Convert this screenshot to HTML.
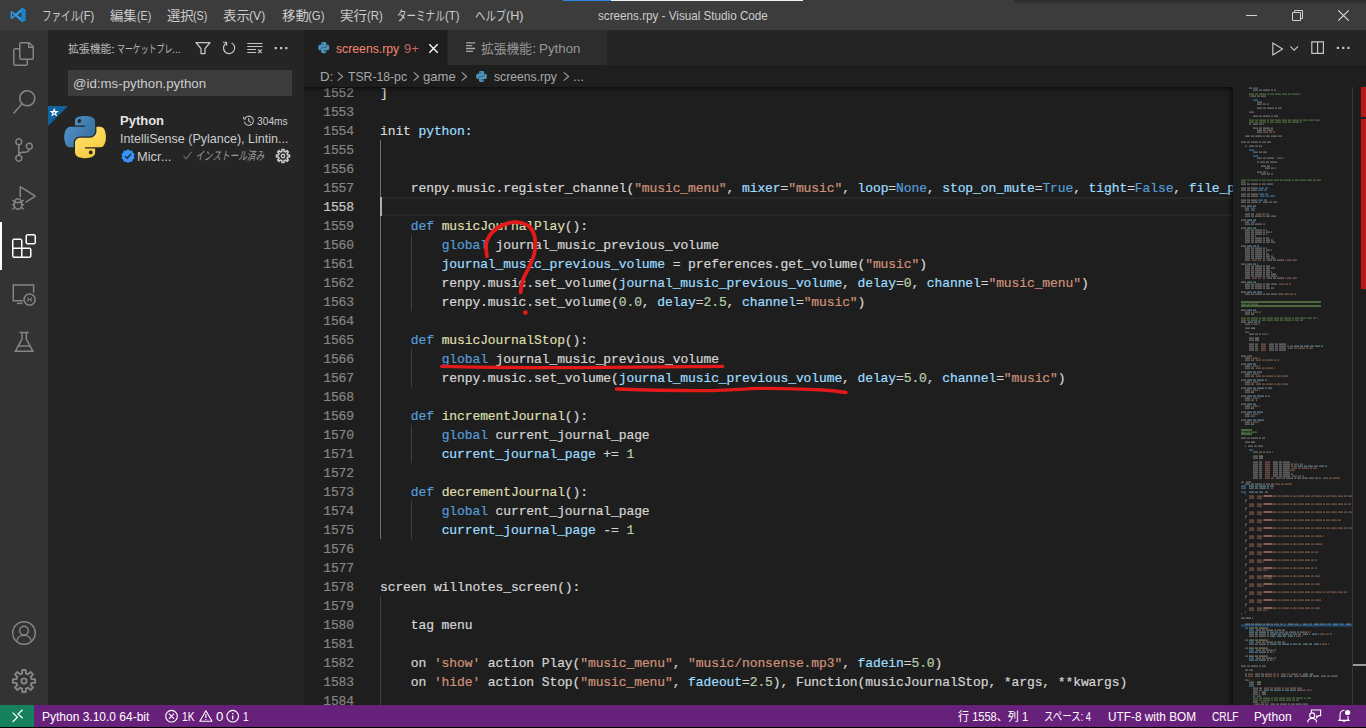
<!DOCTYPE html>
<html lang="ja">
<head>
<meta charset="utf-8">
<title>screens.rpy - Visual Studio Code</title>
<style>
*{box-sizing:border-box;margin:0;padding:0}
html,body{width:1366px;height:728px;overflow:hidden;background:#1e1e1e}
body{position:relative;font-family:"Liberation Sans","Noto Sans CJK JP",sans-serif;font-size:13px;color:#ccc}
.abs{position:absolute}
.t{position:absolute;white-space:nowrap;height:20px;line-height:20px;transform-origin:0 50%;z-index:10}
svg{position:absolute;overflow:visible;z-index:10}
#title{left:0;top:0;width:1366px;height:30px;background:#3c3c3c}
#act{left:0;top:30px;width:48px;height:675px;background:#333}
#side{left:48px;top:30px;width:256px;height:675px;background:#252526}
#search{left:68px;top:70px;width:224px;height:26px;background:#3c3c3c}
#tabs{left:304px;top:30px;width:1062px;height:35px;background:#252526}
#tab1{left:0;top:0;width:143px;height:35px;background:#1e1e1e}
#tab2{left:144px;top:0;width:159px;height:35px;background:#2d2d2d}
#crumbs{left:304px;top:65px;width:1062px;height:22px;background:#1e1e1e;z-index:5}
#code{left:304px;top:83px;width:929px;height:622px;overflow:hidden;font-family:"Liberation Mono",monospace;font-size:13px;letter-spacing:-0.1px;-webkit-text-stroke:0.22px}
.ln{position:absolute;left:0;height:19px;line-height:21px;width:929px;white-space:pre;color:#d4d4d4}
.ln i{position:absolute;left:0;width:50px;text-align:right;font-style:normal;color:#858585}
.ln b{position:absolute;left:76px;font-weight:normal}
.ln.cur i{color:#c6c6c6}
.ln.cur:before{content:"";box-sizing:border-box;position:absolute;left:76px;top:0;width:853px;height:19px;border-top:2px solid #282828;border-bottom:2px solid #282828}
.k{color:#569cd6}.v{color:#9cdcfe}.s{color:#ce9178}.n{color:#b5cea8}.f{color:#dcdcaa}
.g{position:absolute;width:1px;background:#404040}
#status{left:0;top:705px;width:1366px;height:22px;background:#68217a}
#remote{left:0;top:705px;width:34px;height:22px;background:#16825d}
#bottomline{left:0;top:727px;width:1366px;height:1px;background:#000;z-index:20}
</style>
</head>
<body>
<div id="title" class="abs">
<div class="abs" style="left:563px;top:0;width:48px;height:1px;background:#2b88e0"></div>
<div class="abs" style="left:611px;top:0;width:192px;height:1px;background:#f0f0f0"></div>
<div class="abs" style="left:1014px;top:0;width:352px;height:5px;border-bottom-left-radius:6px;background:linear-gradient(to bottom,rgba(0,0,0,.32),rgba(0,0,0,0))"></div>
</div>
<div id="act" class="abs"><div class="abs" style="left:0;top:192px;width:2px;height:48px;background:#fff"></div></div>
<div id="side" class="abs"></div>
<div id="search" class="abs"></div>
<div id="tabs" class="abs"><div id="tab1" class="abs"></div><div id="tab2" class="abs"></div></div>
<div id="crumbs" class="abs"></div>
<div id="code" class="abs">
<div class="g" style="left:76px;top:57px;height:399px;background:#707070"></div>
<div class="g" style="left:76px;top:513px;height:110px"></div>
<div class="g" style="left:107px;top:152px;height:76px"></div>
<div class="g" style="left:107px;top:266px;height:38px"></div>
<div class="g" style="left:107px;top:342px;height:38px"></div>
<div class="g" style="left:107px;top:418px;height:38px"></div>
<div class="abs" style="left:76px;top:114px;width:2px;height:19px;background:#aeafad;z-index:3"></div>
<div class="ln" style="top:0px"><i>1552</i><b>]</b></div>
<div class="ln" style="top:19px"><i>1553</i><b></b></div>
<div class="ln" style="top:38px"><i>1554</i><b>init <span class="v">python:</span></b></div>
<div class="ln" style="top:57px"><i>1555</i><b></b></div>
<div class="ln" style="top:76px"><i>1556</i><b></b></div>
<div class="ln" style="top:95px"><i>1557</i><b>    renpy.music.register_channel(<span class="s">"music_menu"</span>, <span class="v">mixer</span>=<span class="s">"music"</span>, <span class="v">loop</span>=<span class="k">None</span>, <span class="v">stop_on_mute</span>=<span class="k">True</span>, <span class="v">tight</span>=<span class="k">False</span>, <span class="v">file_prefix</span>=<span class="s">""</span></b></div>
<div class="ln cur" style="top:114px"><i>1558</i><b></b></div>
<div class="ln" style="top:133px"><i>1559</i><b>    <span class="k">def</span> <span class="f">musicJournalPlay</span>():</b></div>
<div class="ln" style="top:152px"><i>1560</i><b>        <span class="k">global</span> journal_music_previous_volume</b></div>
<div class="ln" style="top:171px"><i>1561</i><b>        <span class="v">journal_music_previous_volume</span> = preferences.get_volume(<span class="s">"music"</span>)</b></div>
<div class="ln" style="top:190px"><i>1562</i><b>        renpy.music.set_volume(<span class="v">journal_music_previous_volume</span>, <span class="v">delay</span>=<span class="n">0</span>, <span class="v">channel</span>=<span class="s">"music_menu"</span>)</b></div>
<div class="ln" style="top:209px"><i>1563</i><b>        renpy.music.set_volume(<span class="n">0.0</span>, <span class="v">delay</span>=<span class="n">2.5</span>, <span class="v">channel</span>=<span class="s">"music"</span>)</b></div>
<div class="ln" style="top:228px"><i>1564</i><b></b></div>
<div class="ln" style="top:247px"><i>1565</i><b>    <span class="k">def</span> <span class="f">musicJournalStop</span>():</b></div>
<div class="ln" style="top:266px"><i>1566</i><b>        <span class="k">global</span> journal_music_previous_volume</b></div>
<div class="ln" style="top:285px"><i>1567</i><b>        renpy.music.set_volume(<span class="v">journal_music_previous_volume</span>, <span class="v">delay</span>=<span class="n">5.0</span>, <span class="v">channel</span>=<span class="s">"music"</span>)</b></div>
<div class="ln" style="top:304px"><i>1568</i><b></b></div>
<div class="ln" style="top:323px"><i>1569</i><b>    <span class="k">def</span> <span class="f">incrementJournal</span>():</b></div>
<div class="ln" style="top:342px"><i>1570</i><b>        <span class="k">global</span> current_journal_page</b></div>
<div class="ln" style="top:361px"><i>1571</i><b>        <span class="v">current_journal_page</span> += <span class="n">1</span></b></div>
<div class="ln" style="top:380px"><i>1572</i><b></b></div>
<div class="ln" style="top:399px"><i>1573</i><b>    <span class="k">def</span> <span class="f">decrementJournal</span>():</b></div>
<div class="ln" style="top:418px"><i>1574</i><b>        <span class="k">global</span> current_journal_page</b></div>
<div class="ln" style="top:437px"><i>1575</i><b>        <span class="v">current_journal_page</span> -= <span class="n">1</span></b></div>
<div class="ln" style="top:456px"><i>1576</i><b></b></div>
<div class="ln" style="top:475px"><i>1577</i><b></b></div>
<div class="ln" style="top:494px"><i>1578</i><b>screen willnotes_screen():</b></div>
<div class="ln" style="top:513px"><i>1579</i><b></b></div>
<div class="ln" style="top:532px"><i>1580</i><b>    tag menu</b></div>
<div class="ln" style="top:551px"><i>1581</i><b></b></div>
<div class="ln" style="top:570px"><i>1582</i><b>    on <span class="s">'show'</span> action Play(<span class="s">"music_menu"</span>, <span class="s">"music/nonsense.mp3"</span>, <span class="v">fadein</span>=<span class="n">5.0</span>)</b></div>
<div class="ln" style="top:589px"><i>1583</i><b>    on <span class="s">'hide'</span> action Stop(<span class="s">"music_menu"</span>, <span class="v">fadeout</span>=<span class="n">2.5</span>), Function(musicJournalStop, *args, **kwargs)</b></div>
<div class="ln" style="top:608px"><i>1584</i><b></b></div>
</div>
<div class="abs" style="left:304px;top:87px;width:929px;height:618px;box-shadow:inset 0 6px 6px -6px #000,inset -6px 0 6px -6px #000;z-index:7;pointer-events:none"></div>
<svg style="left:1241px;top:87px;z-index:4" width="111" height="618" viewBox="0 0 111 618" fill="none" stroke-width="1.25" stroke-dasharray="5 1 3 1 7 1 2 1 4 1 6 1">
<rect x="0" y="537.5" width="111" height="2" fill="#264f78" stroke="none"/>
<path stroke="#c586c0" opacity="0.6" d="M8 1h3M8 9h1M8 25h5M8 37h2M4 59h2M16 75h2M22 173h2M46 173h4M22 191h2M46 191h4M4 359h1"/>
<path stroke="#569cd6" opacity="0.62" d="M12 1h5M12 13h6M8 63h6M12 69h5M36 71h7M18 101h9M17 103h9M18 107h10M19 109h15M17 113h9M10 121h4M10 123h4M10 135h4M4 245h4M10 329h4M8 363h4M0 399h6M0 401h6M0 405h6M67 537h4M86 537h4M98 537h5M4 541h3M8 543h6M4 553h3M8 555h6M4 561h3M8 563h6M4 569h3M8 571h6M4 593h4M8 599h5M16 609h4"/>
<path stroke="#bdbdbd" opacity="0.5" d="M12 3h23M10 9h15M16 15h6M16 17h12M16 21h26M12 29h26M12 37h11M12 41h20M16 43h16M16 45h5M4 49h37M0 55h30M8 59h13M12 65h14M16 71h18M19 75h17M20 79h10M24 81h11M16 85h11M20 87h12M0 97h33M0 101h17M0 103h16M0 107h17M0 109h18M0 113h16M0 115h21M22 115h14M0 119h5M4 121h4M4 123h4M4 127h10M4 129h31M0 133h5M4 135h4M4 137h20M0 141h5M4 143h22M4 145h27M4 147h22M4 149h11M4 151h24M4 153h28M4 155h30M0 159h5M4 161h22M4 163h27M4 165h22M4 167h24M4 169h28M4 171h30M4 173h6M26 173h19M0 177h5M4 179h25M4 181h30M4 183h25M4 185h27M4 187h31M4 189h33M4 191h6M26 191h19M0 195h5M4 197h33M4 199h24M4 201h29M0 205h5M4 207h38M0 223h5M4 225h7M4 227h5M0 235h6M4 237h7M4 241h5M8 247h12M8 251h5M8 253h5M8 257h10M28 257h18M8 259h10M28 259h24M69 259h4M8 261h10M28 261h18M8 263h10M28 263h18M0 269h5M6 269h6M4 271h7M4 273h10M0 277h5M4 279h7M4 281h10M0 285h5M4 287h7M4 289h10M0 293h5M4 295h7M4 297h10M0 301h5M4 303h7M4 305h5M0 309h5M4 311h7M4 313h10M0 317h5M4 319h7M4 321h5M0 325h5M4 327h7M4 329h5M0 333h5M4 335h7M4 337h5M0 351h24M4 355h5M7 359h15M12 365h12M12 369h5M12 371h5M12 375h10M32 375h18M12 377h10M32 377h20M12 379h10M32 379h24M73 379h4M12 381h10M32 381h18M12 383h10M32 383h16M12 385h10M32 385h18M12 387h10M32 387h20M12 389h10M32 389h18M12 391h10M35 391h45M0 395h3M5 395h6M4 397h29M30 401h2M24 405h3M4 407h1M4 413h2M4 415h1M4 421h2M4 423h1M4 429h2M4 431h1M4 437h2M4 439h1M4 445h2M4 447h1M4 453h2M4 455h1M4 461h2M4 463h1M4 469h2M4 471h1M4 477h2M4 479h1M4 485h2M4 487h1M4 493h2M4 495h1M4 501h2M4 503h1M4 509h2M4 511h1M4 517h2M4 519h1M4 525h1M0 527h1M0 531h4M4 537h28M24 541h3M15 543h29M38 545h25M8 547h23M8 549h23M24 553h3M15 555h29M8 557h23M24 561h3M15 563h20M29 565h2M24 569h3M15 571h20M29 573h2M0 579h26M4 583h3M8 583h4M4 587h2M14 587h12M4 589h2M14 589h12M53 589h9M80 589h17M8 595h6M8 597h6M12 601h10M12 603h10M12 605h7M12 607h7M12 609h2M12 615h5M14 617h13M29 617h38"/>
<path stroke="#6a9955" opacity="0.62" d="M8 7h52M8 33h72M8 35h54M0 93h80M0 95h5M0 217h18M0 231h77M0 233h62M0 345h16M12 611h58M12 613h46"/>
<path stroke="#ce9178" opacity="0.5" d="M22 45h12M15 127h13M11 173h10M51 173h6M11 191h10M51 191h6M38 197h12M43 207h12M12 225h8M12 237h7M21 247h7M20 257h6M20 259h6M20 261h6M47 261h25M20 263h6M12 271h7M15 273h23M12 279h7M15 281h19M12 287h7M15 289h33M12 295h7M15 297h33M12 303h7M12 311h7M12 319h7M12 327h7M12 335h7M25 365h7M24 375h6M24 377h6M53 377h9M24 379h6M24 381h6M51 381h25M24 383h6M49 383h6M24 385h6M24 387h6M24 389h6M51 389h12M24 391h9M82 391h18M34 397h18M8 409h6M16 409h7M31 409h80M8 411h6M16 411h6M8 417h6M16 417h7M31 417h79M8 419h6M16 419h6M8 425h6M16 425h7M31 425h80M8 427h6M16 427h6M8 433h6M16 433h7M31 433h69M8 435h6M16 435h6M8 441h6M16 441h7M31 441h80M8 443h6M16 443h6M8 449h6M16 449h7M31 449h52M8 451h6M16 451h6M8 457h6M16 457h7M31 457h50M8 459h6M16 459h6M8 465h6M16 465h7M31 465h46M8 467h6M16 467h6M8 473h6M16 473h7M31 473h45M8 475h6M16 475h7M8 481h6M16 481h7M31 481h45M8 483h6M16 483h11M8 489h6M16 489h7M31 489h48M8 491h6M16 491h15M8 497h6M16 497h7M31 497h48M8 499h6M16 499h7M8 505h6M16 505h7M31 505h76M8 507h6M16 507h6M8 513h6M16 513h7M31 513h49M8 515h6M16 515h6M8 521h6M16 521h7M31 521h48M8 523h6M16 523h11M33 537h12M53 537h7M63 545h7M79 547h12M55 549h7M81 557h7M7 587h6M26 587h12M40 587h20M7 589h6M26 589h12M23 601h38M60 603h11M20 615h8"/>
<path stroke="#9cdcfe" opacity="0.5" d="M6 119h10M6 133h9M6 141h9M6 159h12M6 177h11M6 195h10M6 205h15M6 223h9M7 235h12M53 259h15M74 259h8M6 277h10M6 285h15M6 293h21M6 301h26M6 309h23M6 317h9M6 325h16M6 333h18M57 379h15M78 379h8M8 399h26M8 401h20M8 405h14M5 531h7M47 537h5M62 537h4M73 537h12M92 537h5M105 537h6M8 545h29M31 547h29M62 547h5M71 547h7M36 549h5M47 549h7M31 557h29M62 557h5M73 557h7M8 565h20M8 573h20M62 587h6M40 589h7M23 603h37"/>
<path stroke="#6a9955" opacity="0.8" stroke-width="1.7" stroke-dasharray="none" d="M0 215h80M0 219h80M0 343h11M0 347h11"/>
<path stroke="#b5cea8" opacity="0.6" d="M10 227h3M10 241h4M14 251h4M14 253h4M10 305h3M15 313h1M10 321h3M10 337h3M10 355h4M18 369h4M18 371h4M68 547h1M31 549h3M42 549h3M68 557h3M32 565h1M32 573h1M69 587h3M48 589h3M16 595h4M16 597h4M21 605h4M21 607h4"/>
<path stroke="#e0a08a" opacity="0.7" stroke-width="1.7" stroke-dasharray="none" d="M23 409h8M23 417h8M23 425h8M23 433h8M23 441h8M23 449h8M23 457h8M23 465h8M23 473h8M23 481h8M23 489h8M23 497h8M23 505h8M23 513h8M23 521h8"/>
<path stroke="#dcdcaa" opacity="0.5" d="M8 541h16M8 553h16M8 561h16M8 569h16M62 589h16"/>
<path stroke="#e02020" opacity="0.9" d="M12 617h1"/>
</svg>
<div id="status" class="abs"></div>
<div id="remote" class="abs"></div>
<span class="t" id="m1a" style="left:42.1px;top:6.0px;font-size:13px;color:#ccc;transform:scaleX(0.7344);">ファイル</span>
<span class="t" id="m1b" style="left:79.8px;top:6.0px;font-size:13px;color:#ccc;transform:scaleX(0.8618);">(F)</span>
<span class="t" id="m2a" style="left:110.1px;top:6.0px;font-size:13px;color:#ccc;transform:scaleX(1.0240);">編集</span>
<span class="t" id="m2b" style="left:136.5px;top:6.0px;font-size:13px;color:#ccc;transform:scaleX(0.8226);">(E)</span>
<span class="t" id="m3a" style="left:166.6px;top:6.0px;font-size:13px;color:#ccc;transform:scaleX(1.0240);">選択</span>
<span class="t" id="m3b" style="left:193.2px;top:6.0px;font-size:13px;color:#ccc;transform:scaleX(0.8288);">(S)</span>
<span class="t" id="m4a" style="left:223.2px;top:6.0px;font-size:13px;color:#ccc;transform:scaleX(1.0323);">表示</span>
<span class="t" id="m4b" style="left:249.4px;top:6.0px;font-size:13px;color:#ccc;transform:scaleX(0.9348);">(V)</span>
<span class="t" id="m5a" style="left:281.5px;top:6.0px;font-size:13px;color:#ccc;transform:scaleX(1.0323);">移動</span>
<span class="t" id="m5b" style="left:307.9px;top:6.0px;font-size:13px;color:#ccc;transform:scaleX(0.8749);">(G)</span>
<span class="t" id="m6a" style="left:339.7px;top:6.0px;font-size:13px;color:#ccc;transform:scaleX(1.0407);">実行</span>
<span class="t" id="m6b" style="left:366.5px;top:6.0px;font-size:13px;color:#ccc;transform:scaleX(0.8769);">(R)</span>
<span class="t" id="m7a" style="left:397.4px;top:6.0px;font-size:13px;color:#ccc;transform:scaleX(0.7337);">ターミナル</span>
<span class="t" id="m7b" style="left:444.8px;top:6.0px;font-size:13px;color:#ccc;transform:scaleX(0.8683);">(T)</span>
<span class="t" id="m8a" style="left:475.1px;top:6.0px;font-size:13px;color:#ccc;transform:scaleX(0.8013);">ヘルプ</span>
<span class="t" id="m8b" style="left:506.2px;top:6.0px;font-size:13px;color:#ccc;transform:scaleX(0.9723);">(H)</span>
<span class="t" id="wt" style="left:598.4px;top:5.5px;font-size:13px;color:#ccc;transform:scaleX(0.8983);">screens.rpy - Visual Studio Code</span>
<span class="t" id="sh1" style="left:67.9px;top:39.2px;font-size:11px;color:#bbb;transform:scaleX(0.9862);">拡張機能</span>
<span class="t" id="sh2" style="left:111.0px;top:39.2px;font-size:11px;color:#bbb;transform:scaleX(1.3000);">:</span>
<span class="t" id="sh3" style="left:117.2px;top:39.2px;font-size:11px;color:#bbb;transform:scaleX(0.7183);">マーケットプレ</span>
<span class="t" id="sh4" style="left:172.2px;top:39.2px;font-size:11px;color:#bbb;transform:scaleX(0.9567);">...</span>
<span class="t" id="sq" style="left:72.7px;top:73.5px;font-size:13px;color:#ccc;transform:scaleX(1.0217);">@id:ms-python.python</span>
<span class="t" id="en" style="left:119.9px;top:110.5px;font-size:13px;color:#e4e4e4;transform:scaleX(0.9997);font-weight:bold">Python</span>
<span class="t" id="ems" style="left:256.6px;top:110.5px;font-size:11px;color:#ccc;transform:scaleX(0.9298);">304ms</span>
<span class="t" id="ed" style="left:119.7px;top:129.3px;font-size:13px;color:#ccc;transform:scaleX(0.9631);">IntelliSense (Pylance), Lintin...</span>
<span class="t" id="ep" style="left:137.0px;top:146.5px;font-size:13px;color:#ccc;transform:scaleX(0.9915);">Micr...</span>
<span class="t" id="ei" style="left:195.8px;top:146.0px;font-size:12px;color:#9a9a9a;transform:scaleX(0.7203) skewX(-16deg);">インストール済み</span>
<span class="t" id="t1" style="left:336.3px;top:39.2px;font-size:13px;color:#f48771;transform:scaleX(0.9405);">screens.rpy</span>
<span class="t" id="t1b" style="left:404.4px;top:39.2px;font-size:13px;color:#c0685a;transform:scaleX(0.9905);">9+</span>
<span class="t" id="t2a" style="left:480.8px;top:39.2px;font-size:13px;color:#969696;transform:scaleX(0.9788);">拡張機能</span>
<span class="t" id="t2b" style="left:532.2px;top:39.2px;font-size:13px;color:#969696;transform:scaleX(1.2659);">:</span>
<span class="t" id="t2c" style="left:538.7px;top:39.2px;font-size:13px;color:#969696;transform:scaleX(1.0251);">Python</span>
<span class="t" id="b1" style="left:319.5px;top:67.3px;font-size:13px;color:#a9a9a9;transform:scaleX(1.0176);">D:</span>
<span class="t" id="b2" style="left:348.4px;top:67.3px;font-size:13px;color:#a9a9a9;transform:scaleX(0.9385);">TSR-18-pc</span>
<span class="t" id="b3" style="left:423.3px;top:67.3px;font-size:13px;color:#a9a9a9;transform:scaleX(1.0068);">game</span>
<span class="t" id="b4" style="left:493.8px;top:67.3px;font-size:13px;color:#a9a9a9;transform:scaleX(0.9345);">screens.rpy</span>
<span class="t" id="b5" style="left:572.7px;top:67.3px;font-size:13px;color:#a9a9a9;transform:scaleX(1.0179);">...</span>
<span class="t" id="s1" style="left:41.6px;top:707.2px;font-size:12px;color:#fff;transform:scaleX(0.9993);">Python 3.10.0 64-bit</span>
<span class="t" id="s2" style="left:182.2px;top:707.2px;font-size:12px;color:#fff;transform:scaleX(0.8556);">1K</span>
<span class="t" id="s3" style="left:215.6px;top:707.2px;font-size:12px;color:#fff;transform:scaleX(1.1034);">0</span>
<span class="t" id="s4" style="left:243.1px;top:707.2px;font-size:12px;color:#fff;transform:scaleX(0.8462);">1</span>
<span class="t" id="s5" style="left:957.7px;top:707.2px;font-size:12px;color:#fff;transform:scaleX(0.9220);">行 1558、列 1</span>
<span class="t" id="s6" style="left:1044.1px;top:707.2px;font-size:12px;color:#fff;transform:scaleX(0.7857);">スペース: 4</span>
<span class="t" id="s7" style="left:1107.9px;top:707.2px;font-size:12px;color:#fff;transform:scaleX(0.9864);">UTF-8 with BOM</span>
<span class="t" id="s8" style="left:1211.7px;top:707.2px;font-size:12px;color:#fff;transform:scaleX(0.8461);">CRLF</span>
<span class="t" id="s9" style="left:1253.8px;top:707.2px;font-size:12px;color:#fff;transform:scaleX(1.0074);">Python</span>
<!-- VS Code logo -->
<svg style="left:10px;top:7px" width="16" height="16" viewBox="0 0 100 100"><path d="M74.9 5.5 L96 15.6 V84.4 L74.9 94.5 L34.5 57.6 L12.4 74.4 L4 70.2 V29.8 L12.4 25.6 L34.5 42.4 Z M75 28 L45 50 L75 72 Z M12.5 38 V62 L25.5 50 Z" fill="#2a9be8" fill-rule="evenodd"/><path d="M74.9 5.5 L96 15.6 V84.4 L74.9 94.5 L71 91 V9 Z" fill="#1b82cd"/></svg>
<!-- window controls -->
<svg style="left:1246px;top:10px" width="11" height="11" viewBox="0 0 11 11"><path d="M0 5.5H11" stroke="#d0d0d0" stroke-width="1"/></svg>
<svg style="left:1292px;top:10px" width="11" height="11" viewBox="0 0 11 11"><path d="M0.5 2.5H8.5V10.5H0.5Z M2.5 2.5V0.5H10.5V8.5H8.5" fill="none" stroke="#d0d0d0" stroke-width="1"/></svg>
<svg style="left:1338px;top:9.5px" width="11" height="11" viewBox="0 0 11 11"><path d="M0.3 0.3L10.7 10.7M10.7 0.3L0.3 10.7" fill="none" stroke="#d8d8d8" stroke-width="1.2"/></svg>
<!-- activity bar -->
<svg style="left:12px;top:42px" width="24" height="24" viewBox="0 0 24 24" fill="#858585"><path d="M17.5 0h-9L7 1.5V6H2.5L1 7.5v15.07L2.5 24h12.07L16 22.57V18h4.7l1.3-1.43V4.5L17.5 0zm0 2.12l2.38 2.38H17.5V2.12zm-3 20.38h-12v-15H7v9.07L8.5 18h6v4.5zm6-6h-12v-15H16V6h4.5v10.5z"/></svg>
<svg style="left:12px;top:90px" width="24" height="24" viewBox="0 0 24 24" fill="#858585"><path d="M15.25 0a8.25 8.25 0 0 0-6.18 13.72L1 22.88l1.12 1 8.05-9.12A8.251 8.251 0 1 0 15.25.01V0zm0 15a6.75 6.75 0 1 1 0-13.5 6.75 6.75 0 0 1 0 13.5z"/></svg>
<svg style="left:12px;top:138px" width="24" height="24" viewBox="0 0 24 24" fill="#858585"><path d="M21.007 8.222A3.738 3.738 0 0 0 15.045 5.2a3.737 3.737 0 0 0 1.156 6.583 2.988 2.988 0 0 1-2.668 1.67h-2.99a4.456 4.456 0 0 0-2.989 1.165V7.4a3.737 3.737 0 1 0-1.494 0v9.117a3.776 3.776 0 1 0 1.816.099 2.99 2.99 0 0 1 2.668-1.667h2.99a4.484 4.484 0 0 0 4.223-3.039 3.736 3.736 0 0 0 3.25-3.687zM4.565 3.738a2.242 2.242 0 1 1 4.484 0 2.242 2.242 0 0 1-4.484 0zm4.484 16.441a2.242 2.242 0 1 1-4.484 0 2.242 2.242 0 0 1 4.484 0zm8.221-9.715a2.242 2.242 0 1 1 0-4.485 2.242 2.242 0 0 1 0 4.485z"/></svg>
<svg style="left:12px;top:186px" width="24" height="24" viewBox="0 0 24 24" fill="#858585"><path d="M10.94 13.5l-1.32 1.32a3.73 3.73 0 0 0-7.24 0L1.06 13.5 0 14.56l1.72 1.72-.22.22V18H0v1.5h1.5v.08c.077.489.214.966.41 1.42L0 22.94 1.06 24l1.65-1.65A4.308 4.308 0 0 0 6 24a4.31 4.31 0 0 0 3.29-1.65L10.94 24 12 22.94 10.09 21c.198-.464.336-.951.41-1.45v-.1H12V18h-1.5v-1.5l-.22-.22L12 14.56l-1.06-1.06zM6 13.5a2.25 2.25 0 0 1 2.25 2.25h-4.5A2.25 2.25 0 0 1 6 13.5zm3 6a3.33 3.33 0 0 1-3 3 3.33 3.33 0 0 1-3-3v-2.25h6v2.25zm14.76-9.9v1.26L13.5 17.37V15.6l8.5-5.37L9 2v9.46a5.07 5.07 0 0 0-1.5-.72V.63L8.64 0l15.12 9.6z"/></svg>
<svg style="left:12px;top:234px" width="24" height="24" viewBox="0 0 24 24" fill="#fff"><path d="M13.5 1.5L15 0h7.5L24 1.5V9l-1.5 1.5H15L13.5 9V1.5zm1.5 0V9h7.5V1.5H15zM0 15V6l1.5-1.5H9L10.5 6v7.5H18l1.5 1.5v7.5L18 24H1.5L0 22.5V15zm9-1.5V6H1.5v7.5H9zM9 15H1.5v7.5H9V15zm1.5 7.5H18V15h-7.5v7.5z"/></svg>
<!-- remote explorer -->
<svg style="left:12px;top:282px" width="24" height="24" viewBox="0 0 24 24" fill="none" stroke="#858585" stroke-width="1.5"><path d="M11.2 18.8H1.3V2.9H21.6V10.8"/><path d="M5 21.4H10.5"/><circle cx="17.6" cy="17.6" r="5.6"/><path d="M15.2 15.6L17 17.5L15.2 19.4M20 15.6L18.2 17.5L20 19.4" stroke-width="1.1"/></svg>
<!-- testing flask -->
<svg style="left:12px;top:330px" width="24" height="24" viewBox="0 0 24 24" fill="none" stroke="#858585" stroke-width="1.5"><path d="M7.5 2.5H16.8"/><path d="M10 2.5V9L3.4 21.3H20.9L14.3 9V2.5"/><path d="M6.4 16H18"/></svg>
<!-- account -->
<svg style="left:12px;top:620.7px" width="24" height="24" viewBox="0 0 24 24" fill="none" stroke="#858585" stroke-width="1.4"><circle cx="12" cy="12" r="11.3"/><circle cx="12" cy="9.6" r="4.4"/><path d="M4.6 20.4C5.2 16.6 8.2 14.4 12 14.4S18.8 16.6 19.4 20.4"/></svg>
<!-- manage gear -->
<svg style="left:12px;top:668.6px" width="24" height="24" viewBox="0 0 24 24" fill="none" stroke="#858585" stroke-width="1.9" stroke-linejoin="round"><path d="M10.11 4.43 L10.25 0.94 L13.75 0.94 L13.89 4.43 L16.02 5.31 L18.58 2.94 L21.06 5.42 L18.69 7.98 L19.57 10.11 L23.06 10.25 L23.06 13.75 L19.57 13.89 L18.69 16.02 L21.06 18.58 L18.58 21.06 L16.02 18.69 L13.89 19.57 L13.75 23.06 L10.25 23.06 L10.11 19.57 L7.98 18.69 L5.42 21.06 L2.94 18.58 L5.31 16.02 L4.43 13.89 L0.94 13.75 L0.94 10.25 L4.43 10.11 L5.31 7.98 L2.94 5.42 L5.42 2.94 L7.98 5.31Z"/><circle cx="12" cy="12" r="2.6"/></svg>
<!-- sidebar header actions -->
<svg style="left:195px;top:40px" width="16" height="16" viewBox="0 0 16 16" fill="none" stroke="#c8c8c8" stroke-width="1.25" stroke-linejoin="round"><path d="M1 2.5H15L10 8.6V13.6H6V8.6Z"/></svg>
<svg style="left:221px;top:40px" width="16" height="16" viewBox="0 0 16 16" fill="none" stroke="#c5c5c5" stroke-width="1.2"><path d="M5.2 3.2A5.6 5.6 0 1 0 10.6 3"/><path d="M2 2.2H5.6V5.8" stroke-width="1.1"/></svg>
<svg style="left:247px;top:40px" width="16" height="16" viewBox="0 0 16 16" fill="none" stroke="#c5c5c5" stroke-width="1"><path d="M0.3 3.5H15.5M0.3 6.5H15.5M0.3 9.5H9M0.3 12.5H9"/><path d="M11 9.3L14.8 13.1M14.8 9.3L11 13.1" stroke-width="1.1"/></svg>
<svg style="left:273px;top:40px" width="16" height="16" viewBox="0 0 16 16" fill="#c5c5c5"><rect x="1.7" y="7" width="2.2" height="2.2"/><rect x="7" y="7" width="2.2" height="2.2"/><rect x="12.2" y="7" width="2.2" height="2.2"/></svg>
<!-- extension item -->
<svg style="left:48px;top:106px" width="20" height="20" viewBox="0 0 20 20"><path d="M0 0H20L0 20Z" fill="#0e639c"/><path d="M6.20 1.70L7.38 4.98L10.86 5.09L8.10 7.22L9.08 10.56L6.20 8.60L3.32 10.56L4.30 7.22L1.54 5.09L5.02 4.98Z" fill="#fff"/><circle cx="6.2" cy="6.8999999999999995" r="0.9" fill="#2a7ab5"/></svg>
<svg style="left:64px;top:116px" width="42.5" height="42.5" viewBox="0 0 112 113"><defs><linearGradient id="pyb" x1="0" y1="0.2" x2="1" y2="0.8"><stop offset="0" stop-color="#5394cb"/><stop offset="1" stop-color="#336a99"/></linearGradient><linearGradient id="pyy" x1="0.2" y1="0" x2="0.8" y2="1"><stop offset="0" stop-color="#ffe477"/><stop offset="1" stop-color="#f7c634"/></linearGradient></defs><path fill="url(#pyb)" d="M54.92 0C50.34.02 45.96.41 42.11 1.09 30.76 3.1 28.7 7.29 28.7 15.03v10.22h26.81v3.41H18.64c-7.79 0-14.62 4.68-16.75 13.59-2.46 10.21-2.57 16.59 0 27.25 1.91 7.94 6.46 13.59 14.25 13.59h9.22V70.84c0-8.85 7.66-16.65 16.75-16.65h26.78c7.45 0 13.41-6.14 13.41-13.63V15.03c0-7.27-6.13-12.72-13.41-13.94C64.28.33 59.5-.02 54.92 0zM40.42 8.22c2.77 0 5.03 2.3 5.03 5.12 0 2.82-2.26 5.1-5.03 5.1-2.78 0-5.03-2.28-5.03-5.1 0-2.82 2.25-5.12 5.03-5.12z"/><path fill="url(#pyy)" d="M85.64 28.66v11.9c0 9.23-7.83 17-16.75 17H42.11c-7.34 0-13.41 6.28-13.41 13.63v25.53c0 7.27 6.32 11.54 13.41 13.63 8.49 2.5 16.63 2.95 26.78 0 6.75-1.95 13.41-5.89 13.41-13.63V86.5H55.51v-3.41h40.19c7.79 0 10.7-5.43 13.41-13.59 2.8-8.4 2.68-16.48 0-27.25-1.93-7.76-5.61-13.59-13.41-13.59H85.64zM70.58 91.81c2.78 0 5.03 2.28 5.03 5.1 0 2.82-2.25 5.12-5.03 5.12-2.77 0-5.03-2.3-5.03-5.12 0-2.82 2.26-5.1 5.03-5.1z"/></svg>
<svg style="left:242.5px;top:114.5px" width="11.5" height="11.5" viewBox="0 0 16 16" fill="none" stroke="#ccc" stroke-width="1.4"><path d="M2.6 4.6A6.4 6.4 0 1 1 1.8 9.4"/><path d="M0.8 2.4V5.6H4.2" stroke-width="1.3"/><path d="M8 4.2V8.4L10.8 10.6"/></svg>
<svg style="left:121px;top:149px" width="14" height="14" viewBox="0 0 16 16"><path d="M8 0.4L10.1 1.9L12.7 1.8L13.4 4.3L15.5 5.8L14.6 8.2L15.5 10.6L13.4 12.1L12.7 14.6L10.1 14.5L8 16L5.9 14.5L3.3 14.6L2.6 12.1L0.5 10.6L1.4 8.2L0.5 5.8L2.6 4.3L3.3 1.8L5.9 1.9Z" fill="#3794ff"/><path d="M4.6 8.3L7 10.6L11.4 5.8" fill="none" stroke="#252526" stroke-width="1.6"/></svg>
<svg style="left:183px;top:151px" width="9" height="9" viewBox="0 0 9 9" fill="none" stroke="#6e6e6e" stroke-width="1.1"><path d="M0.5 5L3 7.8L8.5 0.8"/></svg>
<svg style="left:276px;top:149px" width="14" height="14" viewBox="0 0 16 16" fill="none" stroke="#ccc" stroke-width="1.5" stroke-linejoin="round"><path d="M6.89 3.54 L6.97 1.48 L9.03 1.48 L9.11 3.54 L10.37 4.06 L11.88 2.66 L13.34 4.12 L11.94 5.63 L12.46 6.89 L14.52 6.97 L14.52 9.03 L12.46 9.11 L11.94 10.37 L13.34 11.88 L11.88 13.34 L10.37 11.94 L9.11 12.46 L9.03 14.52 L6.97 14.52 L6.89 12.46 L5.63 11.94 L4.12 13.34 L2.66 11.88 L4.06 10.37 L3.54 9.11 L1.48 9.03 L1.48 6.97 L3.54 6.89 L4.06 5.63 L2.66 4.12 L4.12 2.66 L5.63 4.06Z" transform="translate(-1.2 -1.2) scale(1.15)"/><circle cx="8" cy="8" r="2"/></svg>
<!-- tab icons -->
<svg style="left:318px;top:41.6px" width="11.6" height="11.3" viewBox="0 0 112 113"><path fill="#4e94b8" d="M54.92 0C50.34.02 45.96.41 42.11 1.09 30.76 3.1 28.7 7.29 28.7 15.03v10.22h26.81v3.41H18.64c-7.79 0-14.62 4.68-16.75 13.59-2.46 10.21-2.57 16.59 0 27.25 1.91 7.94 6.46 13.59 14.25 13.59h9.22V70.84c0-8.85 7.66-16.65 16.75-16.65h26.78c7.45 0 13.41-6.14 13.41-13.63V15.03c0-7.27-6.13-12.72-13.41-13.94C64.28.33 59.5-.02 54.92 0zM40.42 8.220c2.77 0 5.03 2.3 5.03 5.12 0 2.82-2.26 5.1-5.03 5.1-2.78 0-5.03-2.28-5.03-5.1 0-2.82 2.25-5.12 5.03-5.12z"/><path fill="#4e94b8" d="M85.64 28.66v11.9c0 9.23-7.83 17-16.75 17H42.11c-7.34 0-13.41 6.28-13.41 13.63v25.53c0 7.27 6.32 11.54 13.41 13.63 8.49 2.5 16.63 2.95 26.78 0 6.75-1.95 13.41-5.89 13.41-13.63V86.5H55.51v-3.41h40.19c7.79 0 10.7-5.43 13.41-13.59 2.8-8.4 2.68-16.48 0-27.25-1.93-7.76-5.61-13.59-13.41-13.59H85.64zM70.58 91.810c2.78 0 5.03 2.28 5.03 5.1 0 2.82-2.25 5.12-5.03 5.12-2.77 0-5.03-2.3-5.03-5.12 0-2.82 2.26-5.1 5.03-5.1z"/></svg>
<svg style="left:429px;top:43.5px" width="9" height="9" viewBox="0 0 9 9" fill="none" stroke="#fff" stroke-width="1.3"><path d="M0.3 0.3L8.7 8.7M8.7 0.3L0.3 8.7"/></svg>
<svg style="left:466px;top:42px" width="9" height="10" viewBox="0 0 9 10" fill="none" stroke="#a6a6a6" stroke-width="1.3"><path d="M0 0.9H9.2M0 3.7H6.3M0 6.5H9.2M0 9.3H7"/></svg>
<!-- breadcrumb chevrons + icon -->
<svg style="left:337px;top:72px" width="7" height="9" viewBox="0 0 7 9" fill="none" stroke="#a0a0a0" stroke-width="1.1"><path d="M0.8 0.3L5.6 4.5L0.8 8.7"/></svg>
<svg style="left:413px;top:72px" width="7" height="9" viewBox="0 0 7 9" fill="none" stroke="#a0a0a0" stroke-width="1.1"><path d="M0.8 0.3L5.6 4.5L0.8 8.7"/></svg>
<svg style="left:461px;top:72px" width="7" height="9" viewBox="0 0 7 9" fill="none" stroke="#a0a0a0" stroke-width="1.1"><path d="M0.8 0.3L5.6 4.5L0.8 8.7"/></svg>
<svg style="left:563px;top:72px" width="7" height="9" viewBox="0 0 7 9" fill="none" stroke="#a0a0a0" stroke-width="1.1"><path d="M0.8 0.3L5.6 4.5L0.8 8.7"/></svg>
<svg style="left:476px;top:71.2px" width="11.2" height="11" viewBox="0 0 112 113"><path fill="#4e94b8" d="M54.92 0C50.34.02 45.96.41 42.11 1.09 30.76 3.1 28.7 7.29 28.7 15.03v10.22h26.81v3.41H18.64c-7.79 0-14.62 4.68-16.75 13.59-2.46 10.21-2.57 16.59 0 27.25 1.91 7.94 6.46 13.59 14.25 13.59h9.22V70.84c0-8.85 7.66-16.65 16.75-16.65h26.78c7.45 0 13.41-6.14 13.41-13.63V15.03c0-7.27-6.13-12.72-13.41-13.94C64.28.33 59.5-.02 54.92 0zM40.42 8.221c2.77 0 5.03 2.3 5.03 5.12 0 2.82-2.26 5.1-5.03 5.1-2.78 0-5.03-2.28-5.03-5.1 0-2.82 2.25-5.12 5.03-5.12z"/><path fill="#4e94b8" d="M85.64 28.66v11.9c0 9.23-7.83 17-16.75 17H42.11c-7.34 0-13.41 6.28-13.41 13.63v25.53c0 7.27 6.32 11.54 13.41 13.63 8.49 2.5 16.63 2.95 26.78 0 6.75-1.95 13.41-5.89 13.41-13.63V86.5H55.51v-3.41h40.19c7.79 0 10.7-5.43 13.41-13.59 2.8-8.4 2.68-16.48 0-27.25-1.93-7.76-5.61-13.59-13.41-13.59H85.64zM70.58 91.811c2.78 0 5.03 2.28 5.03 5.1 0 2.82-2.25 5.12-5.03 5.12-2.77 0-5.03-2.3-5.03-5.12 0-2.82 2.26-5.1 5.03-5.1z"/></svg>
<!-- editor actions -->
<svg style="left:1272px;top:41.5px" width="12" height="14" viewBox="0 0 12 14" fill="none" stroke="#c5c5c5" stroke-width="1.2" stroke-linejoin="round"><path d="M0.8 0.9V13.1L10.6 7Z"/></svg>
<svg style="left:1290px;top:46px" width="9" height="5" viewBox="0 0 9 5" fill="none" stroke="#c5c5c5" stroke-width="1.1"><path d="M0.3 0.4L4.2 4.2L8.1 0.4"/></svg>
<svg style="left:1311px;top:41px" width="13" height="13" viewBox="0 0 13 13" fill="none" stroke="#c5c5c5" stroke-width="1.2"><path d="M0.8 0.8H12.4V12.3H0.8ZM6.6 0.8V12.3"/></svg>
<svg style="left:1336px;top:40px" width="16" height="16" viewBox="0 0 16 16" fill="#c5c5c5"><rect x="0.8" y="6.8" width="2.2" height="2.2"/><rect x="6.1" y="6.8" width="2.2" height="2.2"/><rect x="11.4" y="6.8" width="2.2" height="2.2"/></svg>
<!-- status bar icons -->
<svg style="left:12px;top:709px" width="12" height="14" viewBox="0 0 12 14" fill="none" stroke="#fff" stroke-width="1.2"><path d="M0.6 3.6L5.4 8.3L0.6 13M10.6 0.7L6 5L10.6 9.3"/></svg>
<svg style="left:165px;top:710px" width="13" height="13" viewBox="0 0 13 13" fill="none" stroke="#fff" stroke-width="1.1"><circle cx="6.5" cy="6.2" r="5.8"/><path d="M3.9 3.6L9.1 8.8M9.1 3.6L3.9 8.8"/></svg>
<svg style="left:199px;top:710px" width="14" height="12" viewBox="0 0 14 12" fill="none" stroke="#fff" stroke-width="1.1" stroke-linejoin="round"><path d="M6.9 0.8L13 11.3H0.8Z"/><path d="M6.9 4.2V8M6.9 8.9V10.1" stroke-width="1.2"/></svg>
<svg style="left:226px;top:710px" width="13" height="13" viewBox="0 0 13 13" fill="none" stroke="#fff" stroke-width="1.1"><circle cx="6.7" cy="6.2" r="5.8"/><path d="M6.7 5.4V9.4M6.7 3V4.3" stroke-width="1.3"/></svg>
<svg style="left:1307px;top:709px" width="15" height="14" viewBox="0 0 15 14" fill="none" stroke="#fff" stroke-width="1.1"><path d="M4.4 3.4V1H13.6V6.6H11.6L9.6 8.6V6.6"/><circle cx="5.2" cy="6.4" r="2.5"/><path d="M0.7 13.4C0.9 10.8 2.8 9.4 5.2 9.4S9.5 10.8 9.7 13.4"/></svg>
<svg style="left:1338px;top:709px" width="14" height="15" viewBox="0 0 14 15" fill="none" stroke="#fff" stroke-width="1.1"><path d="M6.4 1.2C3.6 1.4 2 3.4 2 6V10.2L1 11.4H11L10 10.2V7"/><path d="M4.7 11.6A1.5 1.5 0 0 0 7.4 11.6"/><circle cx="9.6" cy="3.5" r="2.6" fill="#fff" stroke="none"/></svg>
<!-- overview ruler -->
<div class="abs" style="left:1352px;top:87px;width:1px;height:618px;background:#383838;z-index:6"></div>
<div class="abs" style="left:1361px;top:87px;width:5px;height:30px;background:#bc1616;z-index:6"></div>
<div class="abs" style="left:1361px;top:119px;width:5px;height:170px;background:#bc1616;z-index:6"></div>
<div class="abs" style="left:1353px;top:664px;width:13px;height:2px;background:#9a9a9a;z-index:6"></div>
<!-- hand-drawn annotations -->
<svg style="left:0;top:0;z-index:12" width="1366" height="728" viewBox="0 0 1366 728" fill="none" stroke="#e41a1a" stroke-width="3.8" stroke-linecap="round" stroke-linejoin="round">
<path d="M486.9 256.1C486 250 485.8 247 486.3 243.2C487.5 238.5 489.5 235 492.7 231.9C496 228.5 500 226 504.7 224.4C508 223 511.5 222.2 515.3 222.1C519 222 522.8 222.7 525.9 224.4C529.2 226 531.4 228.2 532.7 231.1C534.3 234.3 535.2 237.8 535.3 241.7C535.5 245.7 535.2 249.7 534.2 253.8C533.2 258 531.5 262 529.7 265.900C527.800 270 525.500 273.800 523.600 278C521.900 282.500 520.900 287.300 520.600 292.300"/>
<circle cx="525.4" cy="312.6" r="1.5" fill="#e41a1a" stroke-width="1.6"/>
<path d="M441.600 366.300C470 367 520 368 580 367.600C640 367.300 690 366.600 722.700 366.400" stroke-width="3.3"/>
<path d="M616.300 389C650 390.200 690 390.800 713 390.600C730 390.400 745 388.600 760.500 388.400C782 388.200 805 389 823.500 390C832 390.600 840 391.600 846 392.500" stroke-width="3.3"/>
</svg>

<div id="bottomline" class="abs"></div>
</body>
</html>
